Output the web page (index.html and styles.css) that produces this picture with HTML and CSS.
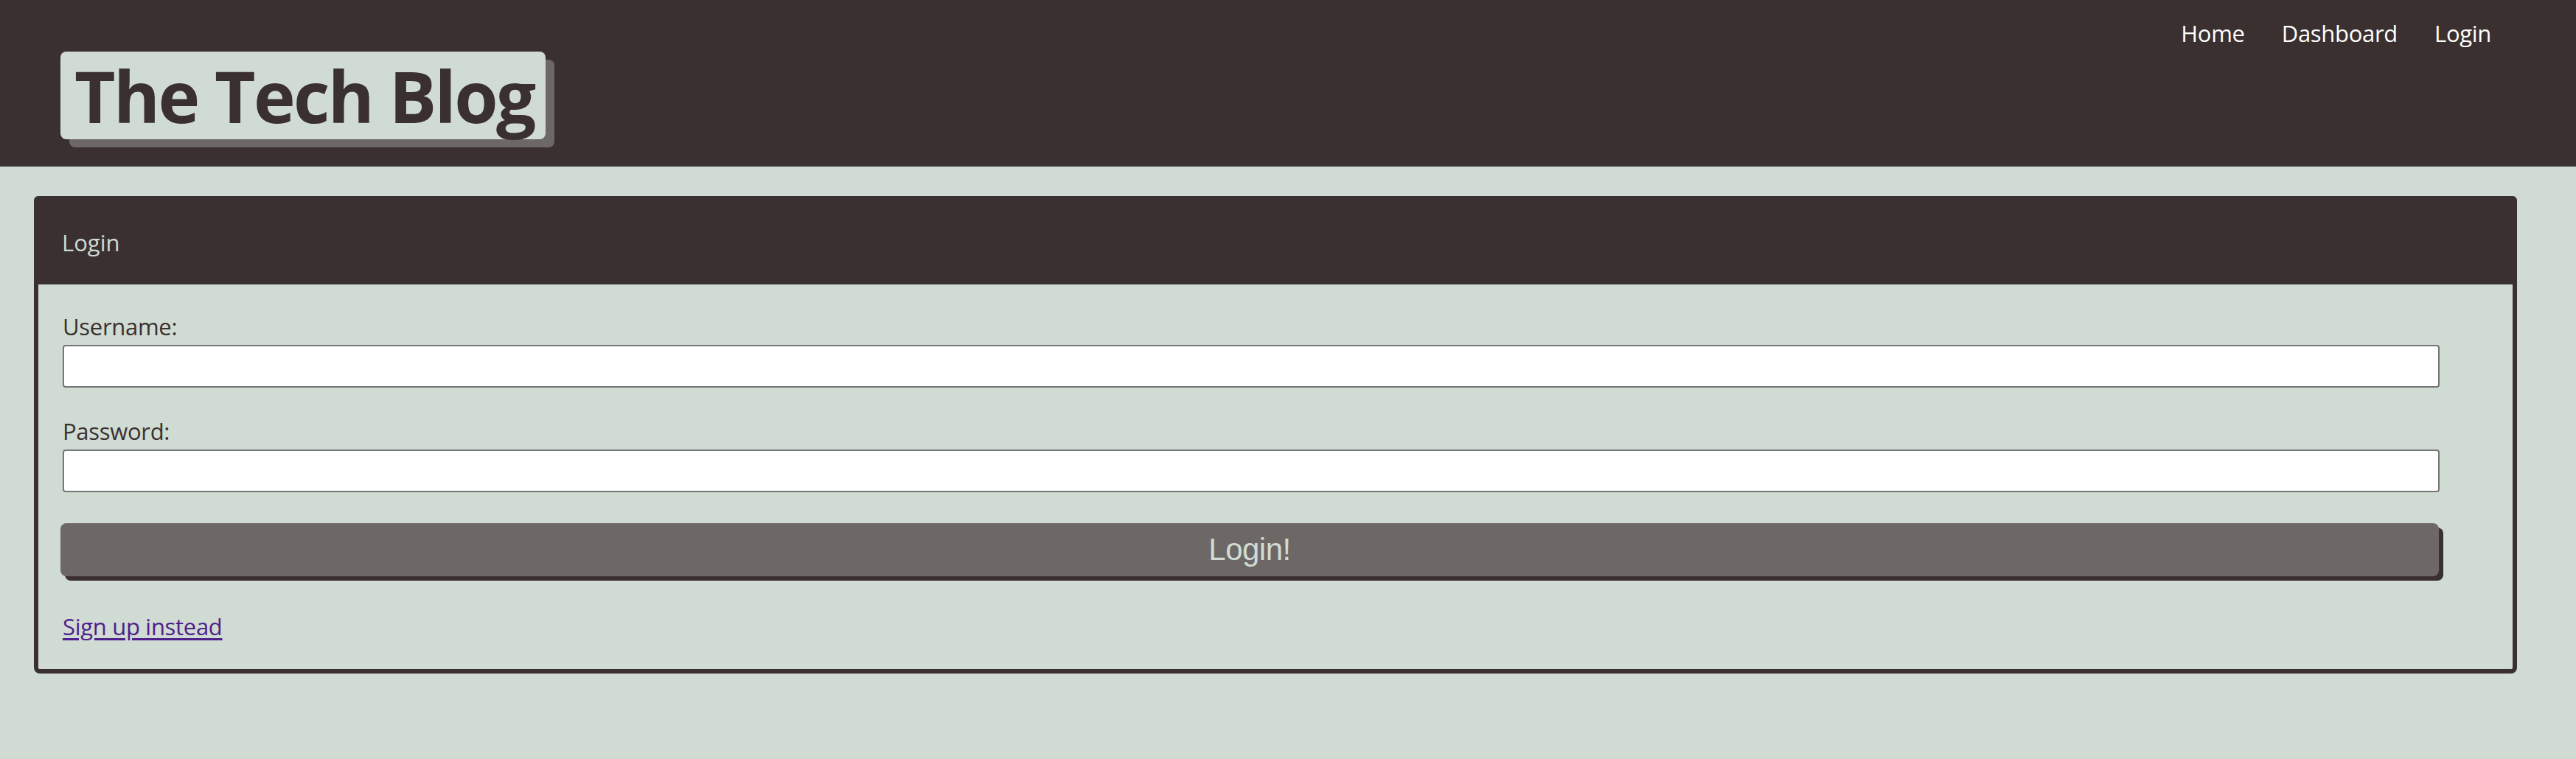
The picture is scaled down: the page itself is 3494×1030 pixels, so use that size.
FILE: index.html
```html
<!DOCTYPE html>
<html lang="en">
<head>
<meta charset="utf-8">
<title>The Tech Blog</title>
<link rel="stylesheet" href="styles.css">
</head>
<body>
<header class="site-header">
  <h1 class="site-title">The Tech Blog</h1>
  <nav class="site-nav">
    <a href="#" class="nav-link">Home</a>
    <a href="#" class="nav-link">Dashboard</a>
    <a href="#" class="nav-link">Login</a>
  </nav>
</header>
<main class="main">
  <section class="card">
    <div class="card-header">Login</div>
    <form class="card-body">
      <label class="field-label" for="username">Username:</label>
      <input class="field-input" id="username" type="text">
      <label class="field-label field-label-2" for="password">Password:</label>
      <input class="field-input" id="password" type="password">
      <button class="submit-btn" type="button">Login!</button>
      <a class="alt-link" href="#">Sign up instead</a>
    </form>
  </section>
</main>
</body>
</html>
```
FILE: styles.css
```css
html, body {
  margin: 0;
  padding: 0;
}
body {
  background: #d0dbd3;
  font-family: "Open Sans", "Noto Sans", sans-serif;
  color: #3a302f;
}
.site-header {
  background: #3a302f;
  height: 226px;
  display: flex;
  justify-content: space-between;
  align-items: flex-start;
}
.site-title {
  margin: 70px 0 0 82px;
  background: #d0dbd3;
  color: #3a302f;
  border-radius: 8px;
  box-shadow: 12px 11px 0 #6d6865;
  font-size: 96px;
  font-weight: 700;
  line-height: 119px;
  height: 119px;
  padding: 0 15px 0 19px;
  letter-spacing: -2.6px;
}
.site-nav {
  margin: 25px 115px 0 0;
  display: flex;
  gap: 50px;
}
.nav-link {
  color: #ffffff;
  text-decoration: none;
  font-size: 31px;
  line-height: 40px;
  letter-spacing: -0.3px;
}
.main {
  padding: 40px 80px 0 46px;
}
.card {
  border: 6px solid #3a302f;
  border-radius: 8px;
}
.card-header {
  background: #3a302f;
  color: #d0dbd3;
  font-size: 31px;
  line-height: 40px;
  margin: -6px -6px 0 -6px;
  border-radius: 6px 6px 0 0;
  padding: 43px 0 37px 38px;
}
.card-body {
  display: flex;
  flex-direction: column;
  align-items: flex-start;
  padding: 37px 99px 38px 33px;
}
.field-label {
  font-size: 31px;
  line-height: 40px;
  letter-spacing: -0.3px;
}
.field-label-2 {
  margin-top: 39px;
}
.field-input {
  box-sizing: border-box;
  width: 100%;
  height: 58px;
  margin-top: 5px;
  border: 2px solid #767676;
  border-radius: 4px;
  background: #ffffff;
}
.submit-btn {
  box-sizing: border-box;
  width: calc(100% + 2px);
  margin: 42px 0 0 -3px;
  height: 72px;
  border: none;
  border-radius: 8px;
  background: #6d6865;
  box-shadow: 6px 6px 0 #3a302f;
  color: #d0dbd3;
  font-family: "Liberation Sans", Arial, sans-serif;
  font-size: 42px;
  letter-spacing: -0.5px;
  padding: 0;
}
.alt-link {
  margin-top: 48px;
  font-size: 31px;
  line-height: 40px;
  color: #4f1f8b;
  text-decoration: underline;
  text-underline-offset: 4px;
  letter-spacing: -0.3px;
}
```
